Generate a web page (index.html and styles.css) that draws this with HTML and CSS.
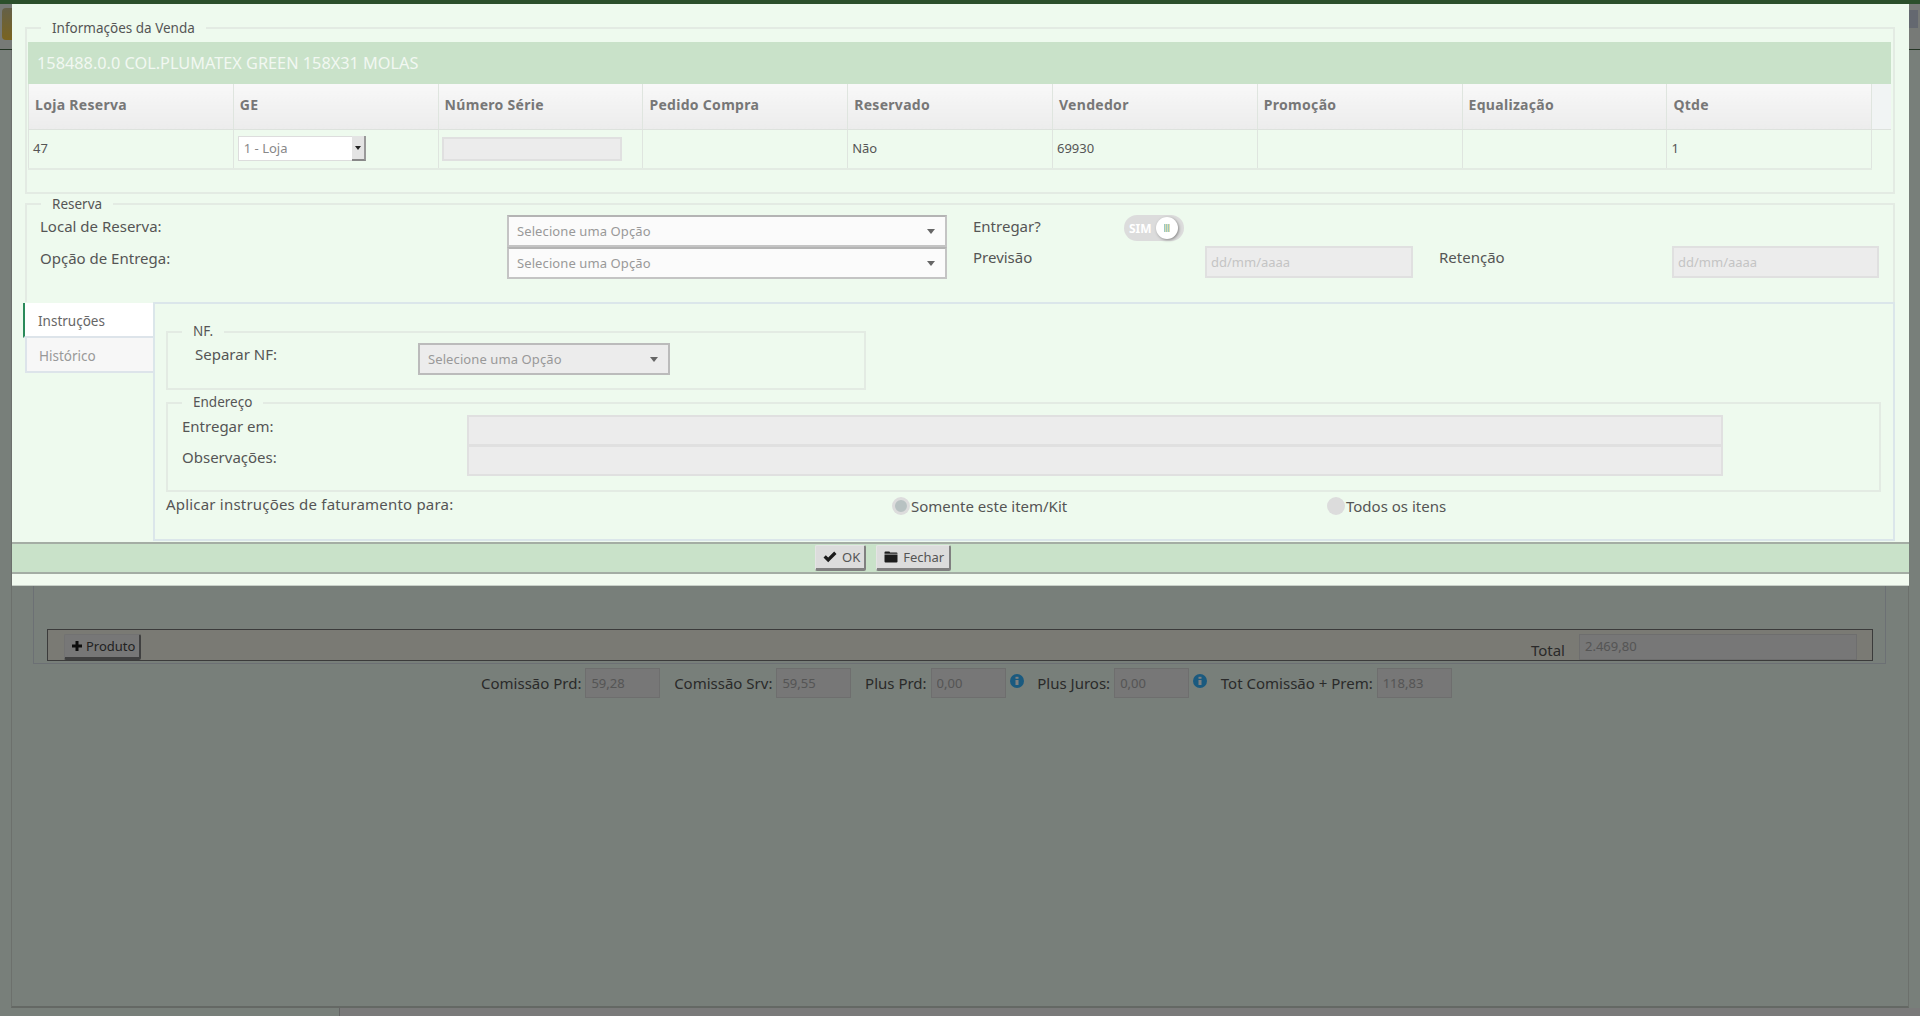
FILE: index.html
```html
<!DOCTYPE html>
<html lang="pt-BR">
<head>
  <meta charset="UTF-8">
  <meta name="viewport" content="width=device-width, initial-scale=1.0">
  <link rel="stylesheet" href="styles.css">
  <title>Informações da Venda</title>
</head>
<body>

  <!-- page behind the dialog -->
  <header class="topbar">
    <div class="topbar-logo"></div>
    <div class="topbar-btn"></div>
  </header>

  <main class="page">
    <section class="items-box">
      <div class="items-bar">
        <button class="btn btn-add">
          <svg class="icon" viewBox="0 0 12 12"><path d="M4.500 1h3v3.500H11v3H7.500V11h-3V7.500H1v-3h3.500z"/></svg>Produto
        </button>
        <span class="total-label">Total</span>
        <input class="field total-field" value="2.469,80" disabled>
      </div>
    </section>
    <div class="summary">
      <label class="summary-item">Comissão Prd: <input class="field" value="59,28" disabled></label>
      <label class="summary-item">Comissão Srv: <input class="field" value="59,55" disabled></label>
      <label class="summary-item">Plus Prd: <input class="field" value="0,00" disabled>
        <svg class="info" viewBox="0 0 14 14"><circle cx="7" cy="7" r="7"/><rect class="info-i" x="5.500" y="6" width="3" height="5"/><rect class="info-i" x="5.500" y="2.800" width="3" height="2"/></svg>
      </label>
      <label class="summary-item">Plus Juros: <input class="field" value="0,00" disabled>
        <svg class="info" viewBox="0 0 14 14"><circle cx="7" cy="7" r="7"/><rect class="info-i" x="5.500" y="6" width="3" height="5"/><rect class="info-i" x="5.500" y="2.800" width="3" height="2"/></svg>
      </label>
      <label class="summary-item">Tot Comissão + Prem: <input class="field" value="118,83" disabled></label>
    </div>
  </main>

  <footer class="statusbar">
    <div class="statusbar-left"></div>
    <div class="statusbar-right"></div>
  </footer>

  <div class="overlay"></div>

  <!-- dialog -->
  <div class="modal">
    <div class="modal-body">

      <fieldset class="group group-venda">
        <legend>Informações da Venda</legend>
        <div class="venda-inner">
          <div class="product-title">158488.0.0 COL.PLUMATEX GREEN 158X31 MOLAS</div>
          <table class="grid">
            <thead>
              <tr>
                <th>Loja Reserva</th>
                <th>GE</th>
                <th>Número Série</th>
                <th>Pedido Compra</th>
                <th>Reservado</th>
                <th>Vendedor</th>
                <th>Promoção</th>
                <th>Equalização</th>
                <th>Qtde</th>
                <th class="gutter"></th>
              </tr>
            </thead>
            <tbody>
              <tr>
                <td>47</td>
                <td class="cell-ctl">
                  <div class="mini-select">
                    <span>1 - Loja</span>
                    <span class="mini-select-btn"></span>
                  </div>
                </td>
                <td class="cell-ctl"><input class="input serie" disabled></td>
                <td></td>
                <td>Não</td>
                <td>69930</td>
                <td></td>
                <td></td>
                <td>1</td>
                <td class="gutter-cell"></td>
              </tr>
            </tbody>
          </table>
        </div>
      </fieldset>

      <fieldset class="group group-reserva">
        <legend>Reserva</legend>
        <div class="reserva-grid">
          <span class="lbl lbl-up">Local de Reserva:</span>
          <div class="combo"><span>Selecione uma Opção</span><i class="caret"></i></div>
          <div class="entregar">
            <span class="lbl lbl-up">Entregar?</span>
            <div class="toggle"><span class="toggle-text">SIM</span><span class="toggle-knob"></span></div>
          </div>

          <span class="lbl lbl-up r2-label">Opção de Entrega:</span>
          <div class="combo r2-combo"><span>Selecione uma Opção</span><i class="caret"></i></div>
          <span class="lbl lbl-up2 r2-previsao">Previsão</span>
          <input class="input date r2-date1" placeholder="dd/mm/aaaa" disabled>
          <span class="lbl lbl-up2 r2-retencao">Retenção</span>
          <input class="input date r2-date2" placeholder="dd/mm/aaaa" disabled>
        </div>
      </fieldset>

      <div class="tabs">
        <nav class="tab-list">
          <a class="tab tab-active">Instruções</a>
          <a class="tab">Histórico</a>
        </nav>
        <div class="tab-panel">
          <fieldset class="group group-nf">
            <legend>NF.</legend>
            <div class="nf-row">
              <span class="lbl lbl-up">Separar NF:</span>
              <div class="combo combo-off"><span>Selecione uma Opção</span><i class="caret"></i></div>
            </div>
          </fieldset>
          <fieldset class="group group-endereco">
            <legend>Endereço</legend>
            <div class="endereco-grid">
              <span class="lbl lbl-up">Entregar em:</span>
              <input class="input" disabled>
              <span class="lbl">Observações:</span>
              <input class="input" disabled>
            </div>
          </fieldset>
          <div class="apply-row">
            <span class="lbl">Aplicar instruções de faturamento para:</span>
            <span class="radio-item"><i class="radio radio-on"></i>Somente este item/Kit</span>
            <span class="radio-item"><i class="radio"></i>Todos os itens</span>
          </div>
        </div>
      </div>
    </div>

    <div class="modal-footer">
      <button class="btn btn-ok">
        <svg class="icon" viewBox="0 0 14 12"><path d="M0.500 6.500l2.300-2.300 2.400 2.400L11.200 0.600l2.300 2.300-8.300 8.300z"/></svg>OK
      </button>
      <button class="btn btn-close">
        <svg class="icon" viewBox="0 0 14 12"><path d="M0.500 2.500V1.500Q0.500 0.500 1.500 0.500H5Q6 0.500 6 1.500H12.500Q13.500 1.500 13.500 2.500V2.800H0.500zM0.500 3.600H13.500V10.500Q13.500 11.500 12.500 11.500H1.500Q0.500 11.500 0.500 10.500z"/></svg>Fechar
      </button>
    </div>
    <div class="modal-tail"></div>
  </div>

</body>
</html>
```

FILE: styles.css
```css
* {
  box-sizing: border-box;
}

body {
  margin: 0;
  height: 1016px;
  overflow: hidden;
  display: flex;
  flex-direction: column;
  font-family: "Noto Sans", "Open Sans", sans-serif;
  font-size: 15px;
  color: #555;
  background-color: #f0fff4;
}

/* page behind the dialog */
.topbar {
  height: 50px;
  flex: none;
  display: flex;
  justify-content: space-between;
  align-items: flex-start;
  padding: 8px 2px 0 2px;
  border-top: 4px solid #569e56;
  border-bottom: 1px solid #4a6a4a;
  background-color: #eef4ee;
}

.topbar-logo {
  width: 40px;
  height: 32px;
  margin-top: -4px;
  background: linear-gradient(#c8c090, #f4c840);
  border-radius: 4px;
}

.topbar-btn {
  width: 9px;
  height: 18px;
  margin-top: -2px;
  background-color: #c8d0e0;
}

.page {
  flex: 1;
  margin-left: 11px;
  margin-right: 11px;
  border-left: 1px solid #d8e0d8;
  border-right: 1px solid #d8e0d8;
  border-bottom: 2px solid #c8d0c8;
  display: flex;
  flex-direction: column;
}

.items-box {
  height: 614px;
  margin: 0 22px 0 21px;
  padding: 0 12px 2px 13px;
  border: 1px solid #d8e0e8;
  border-top: 0;
  display: flex;
  flex-direction: column;
  justify-content: flex-end;
}

.items-bar {
  height: 32px;
  display: flex;
  align-items: flex-start;
  padding: 4px 15px 0 16px;
  border: 1px solid #777;
  background-color: #f4f4e8;
}

.total-label {
  margin-left: auto;
  margin-top: 6px;
  color: #555;
}

.items-bar .total-field {
  width: 278px;
  height: 26px;
  margin-left: 14px;
  padding-bottom: 2px;
}

.summary {
  display: flex;
  align-items: center;
  gap: 13.7px;
  margin-top: 4px;
  padding-left: 469px;
}

.summary-item {
  display: flex;
  align-items: center;
  gap: 4px;
  color: #555;
}

.field {
  width: 75px;
  height: 30px;
  padding: 0 5px;
  border: 1px solid #ddd;
  background-color: #eee;
  color: #aaa;
  font: 13px "Noto Sans", sans-serif;
}

.info {
  width: 14px;
  height: 14px;
  margin-top: -4px;
}

.info circle {
  fill: #34b4ff;
}

.info-i {
  fill: #fff;
}

.statusbar {
  height: 8px;
  flex: none;
  display: flex;
}

.statusbar-left {
  width: 339px;
}

.statusbar-right {
  flex: 1;
  background-color: #f4f4f4;
  border-left: 1px solid #c8c8c8;
}

.overlay {
  position: fixed;
  top: 0;
  left: 0;
  right: 0;
  bottom: 0;
  background-color: rgba(0, 0, 0, 0.5);
}

/* dialog */
.modal {
  position: absolute;
  top: 4px;
  left: 12px;
  width: 1897px;
  height: 582px;
  display: flex;
  flex-direction: column;
  background-color: #eefaee;
  border-bottom: 1px solid #c8d0c8;
}

.modal-body {
  padding: 14px 14px 0 11px;
}

.group {
  margin: 0;
  padding: 0;
  min-width: 0;
  border: 2px solid #e3ebe3;
}

.group legend {
  margin-left: 14px;
  padding: 0 11px 2px;
  line-height: 18px;
  font-size: 13.5px;
  color: #555;
}

.group-venda legend,
.group-reserva legend {
  padding-bottom: 0;
  line-height: 20px;
}

.group-venda {
  margin-left: 2px;
}

.venda-inner {
  padding: 4px 2px 22px 1px;
}

.product-title {
  height: 42px;
  padding-left: 9px;
  line-height: 42px;
  font-size: 16.3px;
  color: #f2f8f2;
  background-color: #c9e2c9;
}

.grid {
  width: 1863px;
  table-layout: fixed;
  border-collapse: collapse;
}

.grid th {
  width: 204.8px;
  height: 45px;
  padding: 0 6px 4px;
  text-align: left;
  font-size: 14px;
  letter-spacing: 0.3px;
  color: #777;
  background: linear-gradient(#f8f8f8, #ececec);
  border-left: 1px solid #dfe5df;
  border-right: 1px solid #dfe5df;
  border-bottom: 1px solid #dde2dd;
}

.grid th.gutter {
  width: 19.8px;
  background: #f1f4f4;
  border-left: 1px solid #dfe5df;
  border-right: 0;
}

.grid td {
  height: 40px;
  padding: 0 4px 2px;
  font-size: 13px;
  color: #555;
  border-left: 1px solid #dfe5df;
  border-right: 1px solid #dfe5df;
  border-bottom: 2px solid #e3ebe3;
}

.grid td.cell-ctl {
  padding: 0 3px 0 4px;
}

.grid td.gutter-cell {
  border: 0;
}

.mini-select {
  width: 128px;
  height: 25px;
  margin-top: -1px;
  display: flex;
  justify-content: space-between;
  align-items: center;
  padding-left: 5px;
  border: 1px solid #ddd;
  background-color: #fff;
  color: #888;
}

.mini-select-btn {
  position: relative;
  width: 14px;
  height: 25px;
  margin-right: -1px;
  background-color: #e4e4e4;
  border-right: 2px solid #999;
  border-bottom: 2px solid #888;
}

.mini-select-btn::after {
  content: "";
  position: absolute;
  top: 10px;
  left: 3px;
  border: 3px solid transparent;
  border-top: 4px solid #222;
  border-bottom: 0;
}

.input {
  width: 100%;
  height: 31px;
  padding: 0 4px;
  border: 2px solid #e0e0e0;
  background-color: #ececec;
  font: 13px "Noto Sans", sans-serif;
}

.input::placeholder {
  color: #c4c4c4;
}

.serie {
  width: 180px;
  height: 24px;
  margin-left: -1px;
}

.group-reserva {
  height: 108px;
  margin: 0 0 0 2px;
  border-bottom: 0;
}

.lbl {
  line-height: 24px;
  align-self: start;
  color: #555;
}

.lbl-up {
  margin-top: -1px;
}

.lbl-up2 {
  margin-top: -2px;
}

.reserva-grid {
  display: grid;
  grid-template-columns: 467px 440px 26px 232px 208px 26px 233px 207px;
  grid-template-rows: 32px 32px;
  padding: 1px 0 0 13px;
}

.r2-label {
  grid-column: 1;
  grid-row: 2;
}

.r2-combo {
  grid-column: 2;
  grid-row: 2;
}

.r2-previsao {
  grid-column: 4;
  grid-row: 2;
}

.r2-date1 {
  grid-column: 5;
  grid-row: 2;
}

.r2-retencao {
  grid-column: 7;
  grid-row: 2;
}

.r2-date2 {
  grid-column: 8;
  grid-row: 2;
}

.combo {
  height: 32px;
  display: flex;
  justify-content: space-between;
  align-items: center;
  padding: 0 10px 0 8px;
  border: 2px solid #c4c4c4;
  border-top-color: #b4b4b4;
  background-color: #fbfbfb;
  font-size: 13px;
  letter-spacing: 0.1px;
  color: #999;
}

.caret {
  width: 0;
  height: 0;
  border-left: 4px solid transparent;
  border-right: 4px solid transparent;
  border-top: 5px solid #666;
}

.entregar {
  grid-column: 4 / 6;
  display: flex;
}

.entregar .lbl {
  width: 151px;
}

.toggle {
  width: 60px;
  height: 26px;
  display: flex;
  align-items: center;
  justify-content: space-between;
  padding: 0 6px 0 5px;
  border-radius: 13px;
  background-color: #dcdcdc;
}

.toggle-text {
  font-size: 12px;
  font-weight: 700;
  color: #fff;
}

.toggle-knob {
  position: relative;
  width: 22px;
  height: 22px;
  border-radius: 50%;
  background-color: #fff;
  box-shadow: 1px 1px 3px #888;
}

.toggle-knob::after {
  content: "";
  position: absolute;
  top: 7px;
  left: 8px;
  width: 6px;
  height: 8px;
  background: repeating-linear-gradient(90deg, #9cc8c4 0 1px, #dcdcb0 1px 2px);
}

.date {
  height: 32px;
  margin-top: -1px;
}

.tabs {
  display: flex;
  height: 239px;
}

.tab-list {
  width: 130px;
  flex: none;
  padding-top: 1px;
}

.tab {
  display: block;
  height: 35px;
  margin-left: 2px;
  padding: 1px 0 0 12px;
  line-height: 34px;
  font-size: 13.5px;
  color: #999;
  background-color: #f7f7f7;
  border-left: 2px solid #dde4ea;
  border-bottom: 2px solid #dde4ea;
}

.tab-active {
  margin-left: 0;
  padding-left: 13px;
  color: #666;
  background-color: #fff;
  border-left: 2px solid #2a8a5a;
}

.tab-panel {
  flex: 1;
  padding: 18px 11px 0 11px;
  border: 2px solid #dbe6ea;
}

.group-nf {
  width: 700px;
  height: 68px;
}

.nf-row {
  display: flex;
  padding: 1px 0 0 27px;
}

.nf-row .lbl {
  width: 223px;
}

.combo-off {
  width: 252px;
  border-color: #bbb;
  background-color: #ececec;
}

.group-endereco {
  width: 1715px;
  height: 99px;
  margin-top: 3px;
}

.endereco-grid {
  display: grid;
  grid-template-columns: 285px 1256px;
  grid-template-rows: 30px 31px;
  padding: 2px 0 0 14px;
}

.apply-row {
  display: flex;
  height: 24px;
}

.apply-row .lbl {
  width: 726px;
  flex: none;
  letter-spacing: 0.2px;
}

.radio-item {
  width: 435px;
  flex: none;
  display: flex;
  align-items: center;
  gap: 1px;
  margin-top: 3px;
  line-height: 24px;
}

.radio {
  width: 18px;
  height: 18px;
  border-radius: 50%;
  background-color: #dcdcdc;
}

.radio-on {
  border: 3px solid #dcdcdc;
  background-color: #b8c2c2;
}

.modal-footer {
  height: 32px;
  flex: none;
  margin-top: 1px;
  display: flex;
  gap: 10px;
  padding: 1px 0 0 803px;
  background-color: #c9e2c9;
  border-top: 2px solid #a4ada4;
  border-bottom: 2px solid #a4ada4;
}

.modal-tail {
  flex: 1;
  background-color: #f2fbf0;
}

.btn {
  display: flex;
  align-items: center;
  gap: 5px;
  height: 26px;
  padding: 0 4px 0 7px;
  border: 1px solid #e4e4e4;
  border-right: 2px solid #808080;
  border-bottom: 3px solid #808080;
  border-radius: 2px;
  background-color: #dcdcdc;
  font: 13px "Noto Sans", sans-serif;
  color: #555;
}

.btn-close {
  padding-right: 5px;
}

.btn-add {
  gap: 2px;
  padding: 0 4px 0 5px;
  color: #444;
  background-color: #eee;
}

.icon {
  width: 14px;
  height: 12px;
  fill: #1c1c1c;
}
```
